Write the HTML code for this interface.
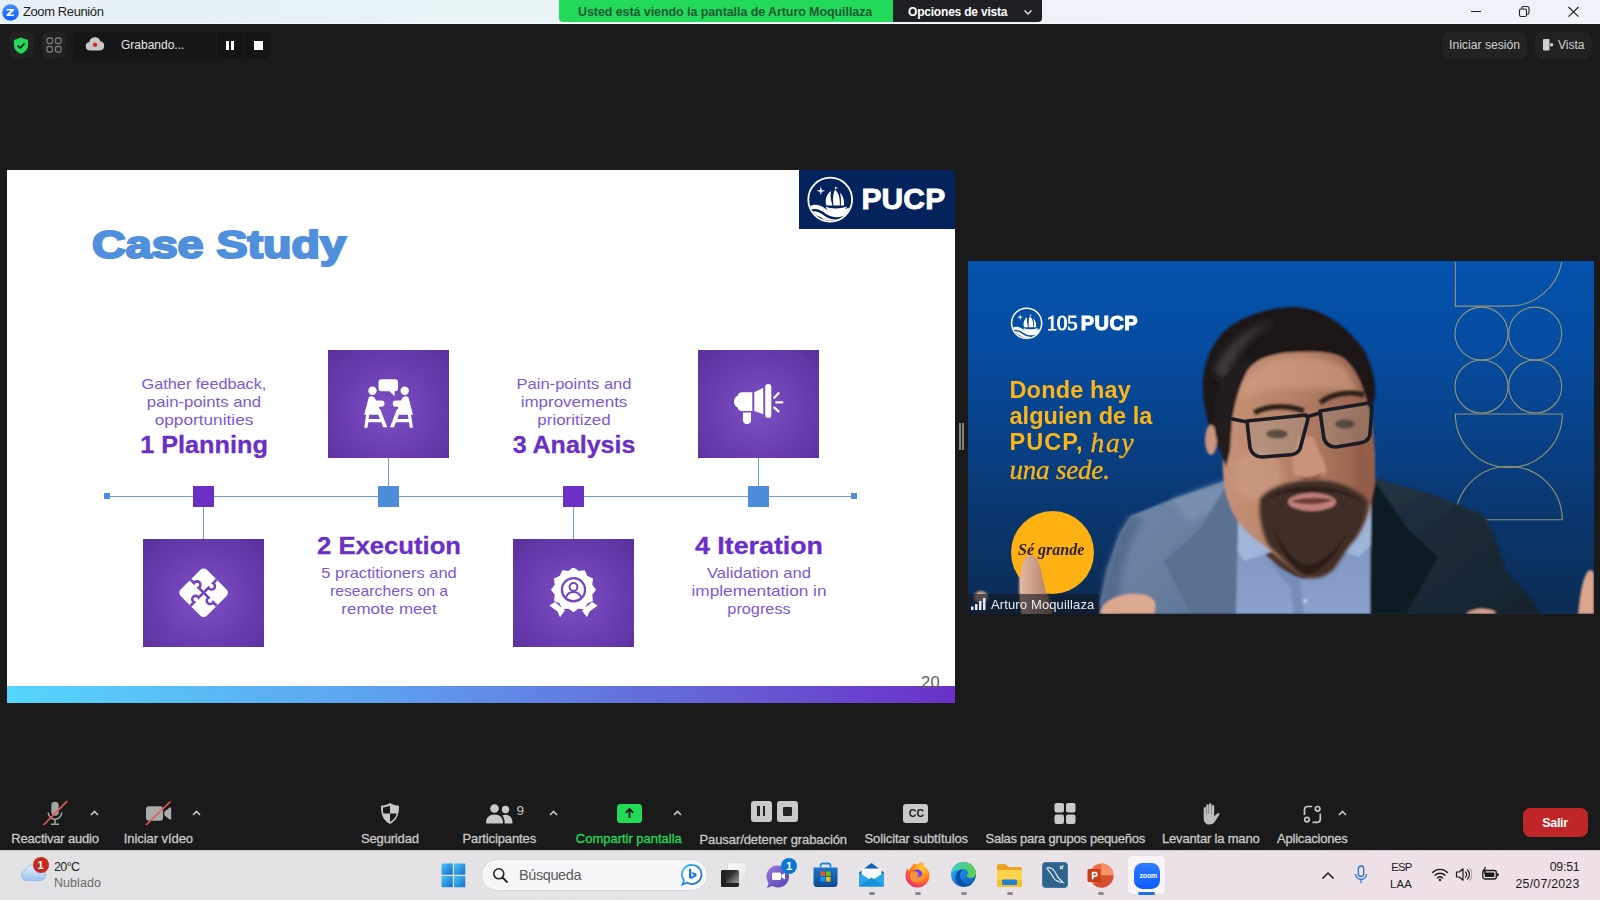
<!DOCTYPE html>
<html lang="es">
<head>
<meta charset="utf-8">
<title>Zoom Reunión</title>
<style>
*{box-sizing:border-box;margin:0;padding:0}
html,body{width:1600px;height:900px;overflow:hidden;background:#1a1a1a;font-family:"Liberation Sans",sans-serif;color:#fff}
body{position:relative}
.a{position:absolute}
.t{position:absolute;white-space:nowrap;line-height:1}
/* title bar */
#titlebar{left:0;top:0;width:1600px;height:24px;background:linear-gradient(90deg,#e5f0f8 0%,#e9f4f7 30%,#edf3f8 70%,#eff3f9 100%)}
#banner{left:559px;top:0;width:334px;height:22px;background:#23d959;border-radius:0 0 0 4px}
#opts{left:893px;top:0;width:149px;height:22px;background:#1f2023;border-radius:0 0 4px 0}
/* slide */
#slide{left:7px;top:170px;width:948px;height:533px;background:#fff;overflow:hidden}
#sbar{left:0;top:516px;width:948px;height:17px;background:linear-gradient(90deg,#55d6fb 0%,#5da0ee 40%,#6560d6 75%,#6b30c8 100%)}
.sq{position:absolute;background:radial-gradient(ellipse at 50% 55%,#7d50c4 0%,#6d40b4 45%,#5a309c 100%)}
.h{position:absolute;white-space:nowrap;line-height:1;color:#6a2fc6;font-weight:bold;font-size:24px;-webkit-text-stroke:.3px #6a2fc6;text-align:center;width:200px;transform-origin:50% 50%}
.p{position:absolute;white-space:nowrap;line-height:18px;color:#8058d2;font-size:15px;text-align:center;width:200px;transform-origin:50% 50%}
/* video */
#video{left:968px;top:261px;width:626px;height:353px;background:linear-gradient(180deg,#0a55b4 0%,#0b4a9e 40%,#0a3574 75%,#0a2a5c 100%);overflow:hidden}
/* toolbar */
.lbl{position:absolute;white-space:nowrap;line-height:1;color:#cfcfcf;font-size:13px;-webkit-text-stroke:.3px currentColor;top:832px}
/* taskbar */
#taskbar{left:0;top:850px;width:1600px;height:50px;background:linear-gradient(90deg,#e2e1e3 0%,#e5e3e6 45%,#eae2e7 70%,#f0e0e7 100%)}
</style>
</head>
<body>
<!-- TITLEBAR -->
<div id="titlebar" class="a"></div>
<div class="a" style="left:0;top:23px;width:1600px;height:1px;background:#f3fcfd"></div>
<svg class="a" style="left:2px;top:4px" width="17" height="17" viewBox="0 0 17 17"><defs><linearGradient id="zg" x1="0" y1="0" x2="0" y2="1"><stop offset="0" stop-color="#4a8cff"/><stop offset="1" stop-color="#0b5cff"/></linearGradient></defs><circle cx="8.5" cy="8.5" r="8.3" fill="url(#zg)"/><path d="M4.6 5h7.2v1.7L7.4 10.4h4.6V12H4.6v-1.6l4.5-3.8H4.6z" fill="#fff"/></svg>
<div class="t" style="left:23px;top:5px;font-size:13px;letter-spacing:-0.4px;color:#1d1d1d">Zoom Reunión</div>
<div id="banner" class="a"></div>
<div class="t" style="left:578px;top:6px;font-size:12.5px;letter-spacing:-0.08px;font-weight:bold;color:#1f5a33">Usted está viendo la pantalla de Arturo Moquillaza</div>
<div id="opts" class="a"></div>
<div class="t" style="left:908px;top:6px;font-size:12px;letter-spacing:-0.2px;font-weight:bold;color:#fff">Opciones de vista</div>
<svg class="a" style="left:1023px;top:9px" width="10" height="7" viewBox="0 0 10 7"><path d="M1.5 1.5L5 5l3.5-3.5" fill="none" stroke="#ddd" stroke-width="1.5"/></svg>
<svg class="a" style="left:1464px;top:4px" width="124" height="16" viewBox="0 0 124 16"><path d="M7 7.500h10" stroke="#1f1f1f" stroke-width="1"/><rect x="55.500" y="5" width="7" height="7.500" rx="1.600" fill="none" stroke="#1f1f1f" stroke-width="1.100"/><path d="M57.700 4.600a2 2 0 0 1 1.900-2.100H63a2 2 0 0 1 2 2V8.500a2 2 0 0 1-1.800 2" fill="none" stroke="#1f1f1f" stroke-width="1.100"/><path d="M104.500 3l10 9.700M114.500 3l-10 9.700" stroke="#1f1f1f" stroke-width="1.100"/></svg>
<!-- TOP CONTROLS -->
<div class="a" style="left:9px;top:32px;width:25px;height:26px;background:#222;border-radius:6px"></div>
<svg class="a" style="left:13px;top:37px" width="16" height="17" viewBox="0 0 16 17"><path d="M8 .5l7 2.600v5.400c0 4-3 6.900-7 8.200C4 15.400 1 12.500 1 8.500V3.100z" fill="#23d959"/><path d="M4.600 8.500l2.500 2.500 4.500-4.600" fill="none" stroke="#1a1a1a" stroke-width="1.700"/></svg>
<div class="a" style="left:42px;top:32px;width:24px;height:26px;background:#222;border-radius:6px"></div>
<svg class="a" style="left:46px;top:37px" width="16" height="16" viewBox="0 0 16 16"><g fill="none" stroke="#7a7a7a" stroke-width="1.300"><rect x="1" y="1" width="5.500" height="5.500" rx="1.500"/><rect x="9.500" y="1" width="5.500" height="5.500" rx="1.500"/><rect x="1" y="9.500" width="5.500" height="5.500" rx="1.500"/><rect x="9.500" y="9.500" width="5.500" height="5.500" rx="1.500"/></g></svg>
<div class="a" style="left:74px;top:32px;width:196px;height:27px;background:#141414;border-radius:4px"></div>
<div class="a" style="left:74px;top:32px;width:142px;height:27px;background:#161616;border-radius:4px 0 0 4px"></div>
<div class="a" style="left:216px;top:32px;width:1px;height:27px;background:#1c1c1c"></div>
<div class="a" style="left:243px;top:32px;width:1px;height:27px;background:#1c1c1c"></div>
<svg class="a" style="left:85px;top:36px" width="20" height="15" viewBox="0 0 20 15"><path d="M5 14.500a4.300 4.300 0 0 1-.6-8.550A5.600 5.600 0 0 1 15.300 5.200 4.700 4.700 0 0 1 15 14.500z" fill="#c9c9c9"/><circle cx="10" cy="8.800" r="2.200" fill="#e02828"/></svg>
<div class="t" style="left:121px;top:39px;font-size:12px;color:#e6e6e6">Grabando...</div>
<div class="a" style="left:226px;top:41px;width:3px;height:9px;background:#fff"></div>
<div class="a" style="left:231px;top:41px;width:3px;height:9px;background:#fff"></div>
<div class="a" style="left:254px;top:41px;width:9px;height:9px;background:#fff"></div>
<div class="a" style="left:1442px;top:32px;width:85px;height:27px;background:#222;border-radius:7px"></div>
<div class="t" style="left:1449px;top:39px;font-size:12.200px;color:#d0d0d0">Iniciar sesión</div>
<div class="a" style="left:1535px;top:32px;width:57px;height:27px;background:#222;border-radius:7px"></div>
<svg class="a" style="left:1542px;top:38px" width="12" height="14" viewBox="0 0 12 14"><rect x="1" y="1" width="6.500" height="11.500" rx="1" fill="#d0d0d0"/><circle cx="9.600" cy="6.800" r="1.700" fill="#d0d0d0"/></svg>
<div class="t" style="left:1558px;top:39px;font-size:12px;color:#d0d0d0">Vista</div>
<!-- SLIDE -->
<div id="slide" class="a">
  <div id="sbar" class="a"></div>
  <div class="t" style="left:914px;top:504px;font-size:16.500px;color:#5e5e62;letter-spacing:.3px">20</div>
  <!-- logo -->
  <div class="a" style="left:792px;top:0;width:156px;height:59px;background:#04225b"></div>
  <svg class="a" style="left:799px;top:6px" width="48" height="48" viewBox="0 0 48 48"><circle cx="24.200" cy="23.600" r="21.900" fill="none" stroke="#fff" stroke-width="1.800"/><clipPath id="ck1"><circle cx="24.200" cy="23.600" r="21"/></clipPath><g clip-path="url(#ck1)"><path d="M1 32C7 27.500 13 28 19 32.500 25 37 33 37.500 46 30V48H1z" fill="#fff"/><path d="M1 37C7 32.500 12.500 33.500 18 38 23.500 42.500 30 43.500 38 41M3 43C8 39 12 40 16.500 44 19 46 22 47 26 47" fill="none" stroke="#04225b" stroke-width="2.300"/></g><path d="M20.500 29.500C18.500 24 20.500 18 25 15 24 20 25 25 26.500 29.500zM27.500 29.500C26.500 22 27.500 16.500 29 13.500 32.500 16.500 34.300 22 33.800 29.500zM34.800 29.500C35.300 24 34.800 19.500 33.800 16.800 37 19.500 38.500 24 38 29.500zM29 13V10.800L32 12z" fill="#fff"/><path d="M19.500 30.500C24 33 34 33 41 30.500 39.500 35 34 37.500 27.500 36.500 23 36 20.500 34 19.500 30.500z" fill="#fff"/><path d="M14.800 10.500l.9 3.400 3.400.9-3.400.9-.9 3.400-.9-3.400-3.400-.9 3.400-.9z" fill="#fff"/></svg>
  <div class="t" style="left:854.500px;top:13.500px;font-size:30px;font-weight:bold;color:#fff;-webkit-text-stroke:.9px #fff;letter-spacing:.1px">PUCP</div>
  <!-- title -->
  <div class="t" style="left:85px;top:55px;font-size:39px;font-weight:bold;color:#4f8fdc;-webkit-text-stroke:2.200px #4f8fdc;padding:0 4px 12px 0;transform-origin:0 50%;transform:scaleX(1.196)">Case Study</div>
  <!-- timeline -->
  <div class="a" style="left:100px;top:325.500px;width:747px;height:1.200px;background:#6a9fe0"></div>
  <div class="a" style="left:97px;top:323px;width:6px;height:6px;background:#4d8edb"></div>
  <div class="a" style="left:844px;top:323px;width:6px;height:6px;background:#4d8edb"></div>
  <div class="a" style="left:196px;top:336px;width:1.200px;height:33px;background:#6a9fe0"></div>
  <div class="a" style="left:381px;top:288px;width:1.200px;height:28px;background:#6a9fe0"></div>
  <div class="a" style="left:566px;top:336px;width:1.200px;height:33px;background:#6a9fe0"></div>
  <div class="a" style="left:751px;top:288px;width:1.200px;height:28px;background:#6a9fe0"></div>
  <div class="a" style="left:186px;top:315.500px;width:21px;height:21px;background:#6a2fc5"></div>
  <div class="a" style="left:371px;top:315.500px;width:21px;height:21px;background:#4d8edb"></div>
  <div class="a" style="left:556px;top:315.500px;width:21px;height:21px;background:#6a2fc5"></div>
  <div class="a" style="left:741px;top:315.500px;width:21px;height:21px;background:#4d8edb"></div>
  <!-- squares -->
  <div class="sq" style="left:136px;top:368.500px;width:121px;height:108.500px"></div>
  <div class="sq" style="left:321px;top:179.500px;width:121px;height:108.500px"></div>
  <div class="sq" style="left:506px;top:368.500px;width:121px;height:108.500px"></div>
  <div class="sq" style="left:691px;top:179.500px;width:121px;height:108.500px"></div>
  <!-- icons -->
  <svg class="a" style="left:356.700px;top:209px" width="50" height="50" viewBox="0 0 50 50" fill="#fff">
    <path d="M17.500 .3h13.500a3 3 0 0 1 3 3v6a3 3 0 0 1-3 3h-.3v5l-5.200-5h-8a3 3 0 0 1-3-3v-6a3 3 0 0 1 3-3z"/>
    <g id="mp"><circle cx="8.500" cy="11.800" r="4.200"/><path d="M4.800 18.200Q7.500 16.300 10.200 18.200L12.200 21.400H17.300a3.200 3.200 0 0 1 0 6.400H15.200V30L16.300 35.800H.2Z"/><path d="M2.300 34.500h3.200L3.500 48.800H.2zM12 30h4.200L23.200 48.300h-4zM1.800 40h17v3.300h-17z"/></g>
    <use href="#mp" transform="translate(49.200 0) scale(-1 1)"/>
  </svg>
  <svg class="a" style="left:726.700px;top:209px" width="50" height="50" viewBox="0 0 50 50" fill="#fff">
    <path d="M8 13.300H18.300V32H8c-2.500 0-4-1.500-4.300-3.500C1.500 28 0 25.500 0 22.700s1.500-5.300 3.700-5.900C4 14.800 5.500 13.300 8 13.300z"/>
    <path d="M9 33.500h8v7.500a4 4 0 0 1-8 0z"/>
    <path d="M20.300 13.300L29.300 8.700V35.300L20.300 32z"/>
    <rect x="31.200" y="5" width="6.100" height="34" rx="3"/>
    <path d="M40.300 18.700L44.500 14.300M42.300 23.300H48.300M40.300 28.700L44.500 32.400" stroke="#fff" stroke-width="2.300" stroke-linecap="round" fill="none"/>
  </svg>
  <svg class="a" style="left:171.700px;top:397.900px" width="50" height="50" viewBox="0 0 50 50">
    <g transform="translate(24.600 24.700) rotate(45)">
      <rect x="-18.500" y="-18.500" width="37" height="37" rx="4.500" fill="#fff"/>
      <g fill="none" stroke="#7344bb" stroke-width="2.600">
        <path d="M0-18.500V-13.500a3.400 3.400 0 1 1 0 6.500V0M0 18.500V13.500a3.400 3.400 0 1 1 0-6.500V0M18.500 0H13.500a3.400 3.400 0 1 1-6.500 0H0M-18.500 0H-13.500a3.400 3.400 0 1 1 6.500 0H0"/>
      </g>
    </g>
  </svg>
  <svg class="a" style="left:541.700px;top:397.900px" width="50" height="50" viewBox="0 0 50 50">
    <path d="M.3 37.500L6 34 16 42.500 11 49.300 8.500 43.500zM48.700 37.500L43 34 33 42.500 38 49.300 40.500 43.500z" fill="#fff"/>
    <path d="M24.5 0.1 L29.3 3.7 L35.3 3.0 L37.7 8.5 L43.2 10.9 L42.5 16.9 L46.1 21.7 L42.5 26.5 L43.2 32.5 L37.7 34.9 L35.3 40.4 L29.3 39.7 L24.5 43.3 L19.7 39.7 L13.7 40.4 L11.3 34.9 L5.8 32.5 L6.5 26.5 L2.9 21.7 L6.5 16.9 L5.8 10.9 L11.3 8.5 L13.7 3.0 L19.7 3.7Z" fill="#fff" stroke="#fff" stroke-width="1.500" stroke-linejoin="round"/>
    <circle cx="24.500" cy="21.700" r="11.600" fill="none" stroke="#7344bb" stroke-width="2.200"/>
    <circle cx="24.500" cy="19" r="3.900" fill="none" stroke="#7344bb" stroke-width="2"/>
    <path d="M16.800 29.500c1.500-4 4.500-5.500 7.700-5.500s6.200 1.500 7.700 5.500" fill="none" stroke="#7344bb" stroke-width="2"/>
  </svg>
  <!-- texts -->
  <div class="p" style="left:96.5px;top:205px;transform:scaleX(1.084)">Gather feedback,</div>
  <div class="p" style="left:96.5px;top:223px;transform:scaleX(1.114)">pain-points and</div>
  <div class="p" style="left:96.5px;top:241px;transform:scaleX(1.149)">opportunities</div>
  <div class="h" style="left:96.5px;top:263.2px;transform:scaleX(1.052)">1 Planning</div>
  <div class="h" style="left:281.5px;top:363.9px;transform:scaleX(1.069)">2 Execution</div>
  <div class="p" style="left:281.5px;top:394px;transform:scaleX(1.097)">5 practitioners and</div>
  <div class="p" style="left:281.5px;top:412px;transform:scaleX(1.048)">researchers on a</div>
  <div class="p" style="left:281.5px;top:430px;transform:scaleX(1.132)">remote meet</div>
  <div class="p" style="left:466.5px;top:205px;transform:scaleX(1.103)">Pain-points and</div>
  <div class="p" style="left:466.5px;top:223px;transform:scaleX(1.133)">improvements</div>
  <div class="p" style="left:466.5px;top:241px;transform:scaleX(1.127)">prioritized</div>
  <div class="h" style="left:466.5px;top:263.2px;transform:scaleX(1.041)">3 Analysis</div>
  <div class="h" style="left:651.5px;top:363.9px;transform:scaleX(1.116)">4 Iteration</div>
  <div class="p" style="left:651.5px;top:394px;transform:scaleX(1.107)">Validation and</div>
  <div class="p" style="left:651.5px;top:412px;transform:scaleX(1.148)">implementation in</div>
  <div class="p" style="left:651.5px;top:430px;transform:scaleX(1.085)">progress</div>
</div>
<div class="a" style="left:959.200px;top:423px;width:1.600px;height:27px;background:#878383"></div>
<div class="a" style="left:962.200px;top:423px;width:1.600px;height:27px;background:#878383"></div>
<!-- VIDEO -->
<div id="video" class="a">
<svg class="a" style="left:0;top:0" width="626" height="353" viewBox="0 0 626 353">
  <defs>
    <linearGradient id="vbg" x1="0" y1="0" x2="0" y2="1"><stop offset="0" stop-color="#0452ae"/><stop offset=".25" stop-color="#064ca0"/><stop offset=".5" stop-color="#084187"/><stop offset=".75" stop-color="#0a356b"/><stop offset="1" stop-color="#0b2c52"/></linearGradient>
    <linearGradient id="jl" x1="0" y1="0" x2="1" y2="1"><stop offset="0" stop-color="#7189aa"/><stop offset=".6" stop-color="#677e9f"/><stop offset="1" stop-color="#5b7394"/></linearGradient>
    <linearGradient id="jr" x1="0" y1="0" x2="1" y2="1"><stop offset="0" stop-color="#243443"/><stop offset=".5" stop-color="#1b2a36"/><stop offset="1" stop-color="#16232c"/></linearGradient>
    <linearGradient id="skin" x1="0" y1="0" x2="1" y2="0"><stop offset="0" stop-color="#c59177"/><stop offset=".45" stop-color="#b58167"/><stop offset="1" stop-color="#955f4b"/></linearGradient>
    <linearGradient id="shirt" x1="0" y1="0" x2="0" y2="1"><stop offset="0" stop-color="#7a91bc"/><stop offset="1" stop-color="#8aa1cb"/></linearGradient>
    <filter id="b1" x="-5%" y="-5%" width="110%" height="110%"><feGaussianBlur stdDeviation="0.800"/></filter>
    <filter id="b3" x="-20%" y="-20%" width="140%" height="140%"><feGaussianBlur stdDeviation="3"/></filter>
    <filter id="b4" x="-10%" y="-10%" width="120%" height="120%"><feGaussianBlur stdDeviation="1.800"/></filter>
  </defs>
  <rect width="626" height="353" fill="url(#vbg)"/>
  <!-- gold line art -->
  <g fill="none" stroke="#b6a972" stroke-width="1.100" opacity=".8" transform="translate(.3 .8)">
    <path d="M487 0V44.300H540.400A53.500 53.500 0 0 0 593.500 0"/>
    <circle cx="513.200" cy="71.800" r="26.500"/><circle cx="566.900" cy="71.800" r="26.500"/>
    <circle cx="513.200" cy="124.700" r="26.500"/><circle cx="566.900" cy="124.700" r="26.500"/>
    <path d="M487 152.200H594A53.500 53.500 0 0 1 487 152.200z"/>
    <path d="M487 258H594A53.500 53.500 0 0 0 487 258z"/>
  </g>
  <!-- person -->
  <g filter="url(#b1)">
    <!-- jacket right (dark) -->
    <path d="M400 215L469 235 516 254 526 273 538 310 566 341 572 353H395z" fill="url(#jr)"/>
    <!-- jacket left (lit) -->
    <path d="M262 218L204 238 162 255 151 273 138 310 132 341V353H275L270 262z" fill="url(#jl)"/>
    <!-- neck -->
    <path d="M280 240H396V330H280z" fill="#4a342c"/>
    <path d="M162 255 151 273 138 310 132 341V353H150C150 320 158 285 176 258z" fill="#4f6689" opacity=".8" filter="url(#b3)"/>
    <path d="M204 238 262 218 266 240 220 262z" fill="#8299b8" opacity=".6" filter="url(#b3)"/>
    <!-- shirt -->
    <path d="M266 246L268 353H402L403 240C385 290 355 318 335 318 310 312 282 282 266 246z" fill="url(#shirt)"/>
    <path d="M266 246l-2 36 12 18 30-10zM403 240l2 42-14 14-26-8z" fill="#9fb5da"/>
    <path d="M262 218L270 262 268 353H222L196 300 232 268z" fill="#5a7192"/>
    <path d="M404 216L403 262 402 353H438L470 296 440 268z" fill="#111b24"/>
    <path d="M300 300L332 318 336 353H326L322 326z" fill="#6f86b2" opacity=".7"/>
    <circle cx="337" cy="340" r="2.300" fill="#b9c8e4"/>
    <!-- hair -->
    <path d="M252 190C244 176 237 158 235 130 234 108 240 90 252 75 266 58 296 47 324 46 352 46 376 62 396 89 404 104 408 120 407 136L402 152 394 130 262 150 258 192z" fill="#1d1919"/>
    <path d="M246 110C256 84 280 66 306 60 284 72 266 92 258 120z" fill="#4a4646" opacity=".7" filter="url(#b3)"/>
    <!-- ear -->
    <ellipse cx="243" cy="179" rx="6" ry="15" fill="#c8967c"/>
    <!-- face -->
    <path d="M262 141C266 128 274 112 288 101 298 94 316 91 332 91 350 90 364 91 374 96 386 104 394 122 398 137L404 160 407 192 407 222 401 251C396 266 390 276 382 284L366 308C354 320 338 320 326 310L294 283C280 274 270 262 264 250 256 232 254 212 255 196L258 169z" fill="url(#skin)"/>
    <path d="M270 136C276 116 292 100 316 97 340 94 364 96 378 108 386 118 388 128 390 134 350 124 304 126 270 136z" fill="#d3a084" opacity=".6" filter="url(#b3)"/>
    <ellipse cx="290" cy="215" rx="24" ry="26" fill="#d0a088" opacity=".55" filter="url(#b3)"/>
    <path d="M384 150C396 170 404 200 402 240 396 262 388 276 380 284 388 250 390 200 384 150z" fill="#8a5444" opacity=".55" filter="url(#b3)"/>
    <!-- sideburn / front lock -->
    <path d="M252 190C244 168 244 142 252 124 258 112 270 100 288 96 276 112 268 132 264 160L262 190 258 206z" fill="#211b1b"/>
    <!-- beard -->
    <path d="M292 238C300 226 322 220 345 219 368 219 388 226 400 240 399 258 392 274 382 284L366 308C354 320 338 320 326 310L300 284C294 270 290 254 292 238z" fill="#3f2d27" filter="url(#b4)"/>
    <path d="M304 262C312 292 326 308 338 314 352 312 368 296 380 270 368 292 350 304 338 304 324 300 312 284 304 262z" fill="#2a1d19"/>
    <path d="M296 240C310 228 330 226 345 226 362 226 382 230 396 242 380 232 362 230 345 230 328 230 310 232 296 240z" fill="#2b1e1a"/>
    <!-- mouth -->
    <ellipse cx="344" cy="241" rx="24" ry="9" fill="#c27f7a"/>
    <path d="M323 240C335 236 354 236 365 239 354 244 334 245 323 240z" fill="#6a3a38"/>
    <!-- nose -->
    <path d="M330 176C326 196 320 210 330 216 340 220 352 218 358 212 360 204 350 192 346 176z" fill="#c9927a"/>
    <path d="M354 211C348 216 336 218 329 214 338 223 352 221 354 211z" fill="#8a5544"/>
    <!-- brows / eyes -->
    <path d="M286 152C300 144 320 144 336 150" stroke="#241815" stroke-width="6" fill="none" opacity=".9"/>
    <path d="M352 142C364 132 382 130 396 134" stroke="#241815" stroke-width="6" fill="none" opacity=".9"/>
    <ellipse cx="309" cy="173" rx="11" ry="4.500" fill="#33221c" opacity=".85"/>
    <ellipse cx="377" cy="163" rx="10" ry="4.500" fill="#33221c" opacity=".85"/>
    <!-- hands -->
    <path d="M132 353C134 340 150 332 170 333 186 334 190 342 186 353z" fill="#dba98f"/>
    <path d="M54 353C50 330 50 305 58 296 64 292 70 296 73 306 78 326 82 340 84 353z" fill="#c99a82"/>
    <path d="M54 353C50 330 50 305 58 296 60 310 62 336 66 353z" fill="#e0b49c"/>
    <path d="M498 353C504 348 516 346 526 350L528 353z" fill="#d6a088"/>
    <ellipse cx="13" cy="336" rx="7" ry="6" fill="#c9a090"/>
    <path d="M610 353C612 335 614 318 620 310 624 308 626 310 626 314V353z" fill="#dba68c"/>
  </g>
  <!-- glasses -->
  <g fill="rgba(150,175,165,.22)" stroke="#1c1c24" stroke-width="3.600" stroke-linejoin="round">
    <path d="M279 160L338 154 340 158 332 188C330 192 326 194 320 194L294 196C288 196 284 193 282 187z"/>
    <path d="M352 150L401 142 404 146 402 172C402 178 398 181 392 182L368 186C362 186 358 183 356 178z"/>
  </g>
  <path d="M338 156L352 152M279 161L250 155" stroke="#1c1c24" stroke-width="3.400" fill="none"/>
</svg>
<!-- logo -->
<svg class="a" style="left:41.700px;top:46.200px" width="33" height="33" viewBox="0 0 48 48"><circle cx="24.200" cy="23.600" r="21.900" fill="none" stroke="#fff" stroke-width="2.200"/><clipPath id="ck2"><circle cx="24.200" cy="23.600" r="21"/></clipPath><g clip-path="url(#ck2)"><path d="M1 32C7 27.500 13 28 19 32.500 25 37 33 37.500 46 30V48H1z" fill="#fff"/><path d="M1 37C7 32.500 12.500 33.500 18 38 23.500 42.500 30 43.500 38 41M3 43C8 39 12 40 16.500 44 19 46 22 47 26 47" fill="none" stroke="#0650a8" stroke-width="2.300"/></g><path d="M20.500 29.500C18.500 24 20.500 18 25 15 24 20 25 25 26.500 29.500zM27.500 29.500C26.500 22 27.500 16.500 29 13.500 32.500 16.500 34.300 22 33.800 29.500zM34.800 29.500C35.300 24 34.800 19.500 33.800 16.800 37 19.500 38.500 24 38 29.500zM29 13V10.800L32 12z" fill="#fff"/><path d="M19.500 30.500C24 33 34 33 41 30.500 39.500 35 34 37.500 27.500 36.500 23 36 20.500 34 19.500 30.500z" fill="#fff"/><path d="M14.800 10.500l.9 3.400 3.400.9-3.400.9-.9 3.400-.9-3.400-3.400-.9 3.400-.9z" fill="#fff"/></svg>
<div class="t" style="left:78.500px;top:52.300px;font-family:'Liberation Serif',serif;font-size:21.500px;-webkit-text-stroke:.8px #fff;color:#fff;letter-spacing:-.45px">105</div>
<div class="t" style="left:112.800px;top:52.200px;font-size:20px;font-weight:bold;color:#fff;-webkit-text-stroke:1px #fff;letter-spacing:.45px">PUCP</div>
<!-- slogan -->
<div class="t" style="left:41.500px;top:117.500px;font-size:23.500px;font-weight:bold;letter-spacing:.15px;color:#fdb515">Donde hay</div>
<div class="t" style="left:41.500px;top:144.200px;font-size:23.500px;font-weight:bold;letter-spacing:.05px;color:#fdb515">alguien de la</div>
<div class="t" style="left:41.500px;top:170.200px;font-size:23.500px;font-weight:bold;letter-spacing:1.050px;color:#fdb515">PUCP,</div>
<div class="t" style="left:122.500px;top:167.500px;font-family:'Liberation Serif',serif;font-style:italic;font-size:27.500px;letter-spacing:1.800px;-webkit-text-stroke:.35px #fdb515;color:#fdb515">hay</div>
<div class="t" style="left:41.500px;top:195.700px;font-family:'Liberation Serif',serif;font-style:italic;font-size:27px;letter-spacing:-.2px;-webkit-text-stroke:.35px #fdb515;color:#fdb515">una sede.</div>
<!-- yellow circle -->
<div class="a" style="left:42.500px;top:250px;width:83px;height:83px;border-radius:50%;background:#fdb112"></div>
<div class="t" style="left:50px;top:281px;font-family:'Liberation Serif',serif;font-style:italic;font-weight:bold;font-size:16px;color:#2a1f30">Sé grande</div>
<!-- finger over circle -->
<svg class="a" style="left:40px;top:285px" width="60" height="68" viewBox="0 0 60 68"><defs><linearGradient id="fg2" x1="0" y1="0" x2="1" y2="0"><stop offset="0" stop-color="#e3b8a0"/><stop offset=".5" stop-color="#c99a82"/><stop offset="1" stop-color="#a97860"/></linearGradient><filter id="b2"><feGaussianBlur stdDeviation=".7"/></filter></defs><path d="M14 68C11 45 11 22 17 12 22 6 29 9 32 20 36 40 40 55 44 68z" fill="url(#fg2)" filter="url(#b2)"/></svg>
<!-- name label -->
<div class="a" style="left:0;top:332.500px;width:131px;height:20.500px;background:rgba(20,24,34,.62)"></div>
<svg class="a" style="left:3px;top:336px" width="15" height="14" viewBox="0 0 15 14"><g fill="#e8e8ee"><rect x="0" y="9.500" width="2.500" height="3.500"/><rect x="4" y="7" width="2.500" height="6"/><rect x="8" y="4" width="2.500" height="9"/><rect x="12" y="1" width="2.500" height="12"/></g></svg>
<div class="t" style="left:23px;top:337px;font-size:13px;letter-spacing:.13px;color:#ecebf3">Arturo Moquillaza</div>
</div>
<!-- TOOLBAR -->
<svg class="a" style="left:42px;top:799px" width="28" height="28" viewBox="0 0 28 28"><rect x="9.300" y="2.800" width="7.400" height="14" rx="3.700" fill="#a4a4a4"/><path d="M6.300 13.500a6.700 6.700 0 0 0 13.400 0M13 20.200v4.500M9 25.200h8" fill="none" stroke="#a4a4a4" stroke-width="1.600"/><path d="M1.500 26L25.200 2.200" stroke="#e9575c" stroke-width="1.700"/></svg>
<svg class="a" style="left:90px;top:810px" width="9" height="6" viewBox="0 0 9 6"><path d="M1 5L4.500 1.500 8 5" fill="none" stroke="#c9c9c9" stroke-width="1.600"/></svg>
<svg class="a" style="left:144px;top:799px" width="30" height="28" viewBox="0 0 30 28"><rect x="2" y="7.200" width="17" height="14.600" rx="3" fill="#ababab"/><path d="M20.300 12.800L25.600 8.600a1 1 0 0 1 1.600.8v10.200a1 1 0 0 1-1.600.8L20.300 16.200z" fill="#ababab"/><path d="M2 26L26.500 2.500" stroke="#e9575c" stroke-width="1.700"/></svg>
<svg class="a" style="left:192px;top:810px" width="9" height="6" viewBox="0 0 9 6"><path d="M1 5L4.500 1.500 8 5" fill="none" stroke="#c9c9c9" stroke-width="1.600"/></svg>
<svg class="a" style="left:379px;top:802px" width="22" height="23" viewBox="0 0 22 23"><path d="M11 1c3 2 6 2.600 9 2.800 0 9-2 14.500-9 18.200C4 18.300 2 12.800 2 3.800 5 3.600 8 3 11 1z" fill="#c9c9c9"/><path d="M11 3.500V11.500H4.300C4 9.500 3.900 7.500 3.900 5.600 6.500 5.300 9 4.600 11 3.500zM11 11.500h6.700c-.8 3.600-2.700 6.300-6.700 8.500z" fill="#1a1a1a"/></svg>
<svg class="a" style="left:485px;top:803px" width="30" height="21" viewBox="0 0 30 21"><circle cx="9.500" cy="5.500" r="4.300" fill="#c9c9c9"/><path d="M1 19.500c0-5 3.500-8 8.500-8s8.500 3 8.500 8c0 .5-.4 1-1 1H2c-.6 0-1-.5-1-1z" fill="#c9c9c9"/><circle cx="20.500" cy="6.500" r="3.700" fill="#c9c9c9"/><path d="M19 12c4.500-.8 8.500 2 8.500 7.500 0 .5-.4 1-1 1H19.500c.3-3-.2-6-2.300-8 .6-.2 1.200-.4 1.800-.5z" fill="#c9c9c9"/></svg>
<div class="t" style="left:516.500px;top:804.200px;font-size:13.500px;color:#c4c4c4">9</div>
<svg class="a" style="left:549px;top:810px" width="9" height="6" viewBox="0 0 9 6"><path d="M1 5L4.500 1.500 8 5" fill="none" stroke="#c9c9c9" stroke-width="1.600"/></svg>
<div class="a" style="left:617px;top:804px;width:25px;height:18.500px;background:#23d959;border-radius:3.500px"></div>
<svg class="a" style="left:624px;top:807px" width="11" height="12" viewBox="0 0 11 12"><path d="M5.500 11V2.500M1.800 5.800L5.500 2 9.200 5.800" fill="none" stroke="#111" stroke-width="1.700"/></svg>
<svg class="a" style="left:673px;top:810px" width="9" height="6" viewBox="0 0 9 6"><path d="M1 5L4.500 1.500 8 5" fill="none" stroke="#c9c9c9" stroke-width="1.600"/></svg>
<div class="a" style="left:750.500px;top:800.500px;width:21px;height:21px;background:#c9c9c9;border-radius:3px"></div>
<div class="a" style="left:757px;top:806px;width:2.500px;height:10px;background:#222"></div><div class="a" style="left:762.500px;top:806px;width:2.500px;height:10px;background:#222"></div>
<div class="a" style="left:776.500px;top:800.500px;width:21px;height:21px;background:#c9c9c9;border-radius:3px"></div>
<div class="a" style="left:782.500px;top:806.500px;width:9px;height:9px;background:#222;border-radius:1px"></div>
<div class="a" style="left:903px;top:804px;width:25px;height:18.500px;background:#c9c9c9;border-radius:3px"></div>
<div class="t" style="left:908.800px;top:807.700px;font-size:10.500px;font-weight:bold;color:#222;letter-spacing:.1px">CC</div>
<svg class="a" style="left:1054px;top:803px" width="22" height="21" viewBox="0 0 22 21"><g fill="#c9c9c9"><rect x=".5" y="0" width="9.500" height="9.500" rx="2"/><rect x="12" y="0" width="9.500" height="9.500" rx="2"/><rect x=".5" y="11.500" width="9.500" height="9.500" rx="2"/><rect x="12" y="11.500" width="9.500" height="9.500" rx="2"/></g></svg>
<svg class="a" style="left:1203px;top:802.500px" width="18" height="22" viewBox="0 0 18 22"><path d="M.7 5.200a1.150 1.150 0 0 1 2.300 0V11h.3V2.500a1.200 1.200 0 0 1 2.400 0V11h.3V1.500a1.200 1.200 0 0 1 2.400 0V11h.3V3.200a1.250 1.250 0 0 1 2.500 0V13.500l3.300-3.200c1-1 2.600.3 1.700 1.500L12.300 18c-1.300 2.300-3.300 3.600-6 3.600-3.500 0-5.600-2.600-5.600-6.100z" fill="#bdbdbd"/></svg>
<svg class="a" style="left:1302.500px;top:805px" width="19" height="19" viewBox="0 0 19 19"><g fill="none" stroke="#c9c9c9" stroke-width="1.700"><path d="M1.500 10V4.500a3 3 0 0 1 3-3h4.700M17.300 8.500V14.300a3 3 0 0 1-3 3h-4.800"/><circle cx="14.600" cy="3.800" r="2.300"/><circle cx="4" cy="14.600" r="2.300"/></g></svg>
<svg class="a" style="left:1338px;top:810px" width="9" height="6" viewBox="0 0 9 6"><path d="M1 5L4.500 1.500 8 5" fill="none" stroke="#c9c9c9" stroke-width="1.600"/></svg>
<div class="lbl" style="left:11.3px;top:832px;color:#c9c9c9;letter-spacing:-0.189px">Reactivar audio</div>
<div class="lbl" style="left:123.8px;top:832px;color:#c9c9c9;letter-spacing:-0.069px">Iniciar vídeo</div>
<div class="lbl" style="left:361px;top:832px;color:#c9c9c9;letter-spacing:-0.165px">Seguridad</div>
<div class="lbl" style="left:462.5px;top:832px;color:#c9c9c9;letter-spacing:-0.127px">Participantes</div>
<div class="lbl" style="left:575.8px;top:832px;color:#23d959;letter-spacing:-0.012px">Compartir pantalla</div>
<div class="lbl" style="left:699.5px;top:833px;color:#c9c9c9;letter-spacing:-0.088px">Pausar/detener grabación</div>
<div class="lbl" style="left:864.5px;top:832px;color:#c9c9c9;letter-spacing:-0.100px">Solicitar subtítulos</div>
<div class="lbl" style="left:985.5px;top:832px;color:#c9c9c9;letter-spacing:-0.259px">Salas para grupos pequeños</div>
<div class="lbl" style="left:1162px;top:832px;color:#c9c9c9;letter-spacing:-0.185px">Levantar la mano</div>
<div class="lbl" style="left:1277px;top:832px;color:#c9c9c9;letter-spacing:-0.208px">Aplicaciones</div>
<div class="a" style="left:1523.200px;top:808.100px;width:64.900px;height:28.800px;background:#c02627;border-radius:7.500px"></div>
<div class="t" style="left:1542.300px;top:816.700px;font-size:12.500px;font-weight:bold;color:#fff;letter-spacing:-.35px">Salir</div>
<!-- TASKBAR -->
<div id="taskbar" class="a"></div>
<div class="a" style="left:0;top:850px;width:1600px;height:1px;background:#c9c7cc"></div>
<!-- weather -->
<svg class="a" style="left:20px;top:862px" width="28" height="20" viewBox="0 0 28 20"><defs><linearGradient id="cl" x1="0" y1="0" x2="0" y2="1"><stop offset="0" stop-color="#e8f1fc"/><stop offset="1" stop-color="#9ec2f2"/></linearGradient></defs><path d="M6.500 18.500a5 5 0 0 1-.8-9.900A7.500 7.500 0 0 1 20 7.500a5.500 5.500 0 0 1 .5 11z" fill="url(#cl)" stroke="#8db4ea" stroke-width=".8"/></svg>
<div class="a" style="left:32.500px;top:857px;width:16px;height:16px;background:#c42b1c;border-radius:8px"></div>
<div class="t" style="left:37.500px;top:859.500px;font-size:11px;font-weight:bold;color:#fff">1</div>
<div class="t" style="left:54px;top:860.600px;font-size:12.500px;letter-spacing:-.6px;color:#1b1b1b">20°C</div>
<div class="t" style="left:54px;top:877px;font-size:12.500px;letter-spacing:.05px;color:#6a6a6a">Nublado</div>
<!-- start -->
<svg class="a" style="left:441px;top:863px" width="25" height="25" viewBox="0 0 25 25"><defs><linearGradient id="wg" x1="0" y1="0" x2="1" y2="1"><stop offset="0" stop-color="#4cc2f5"/><stop offset="1" stop-color="#0f6fd0"/></linearGradient></defs><g fill="url(#wg)"><rect x=".5" y=".5" width="11.300" height="11.300" rx=".8"/><rect x="13" y=".5" width="11.300" height="11.300" rx=".8"/><rect x=".5" y="13" width="11.300" height="11.300" rx=".8"/><rect x="13" y="13" width="11.300" height="11.300" rx=".8"/></g></svg>
<!-- search -->
<div class="a" style="left:481px;top:859px;width:227px;height:32px;background:#f7f7f9;border:1px solid #d9d8dd;border-radius:16px"></div>
<svg class="a" style="left:492px;top:867px" width="17" height="17" viewBox="0 0 17 17"><circle cx="6.800" cy="6.800" r="5" fill="none" stroke="#222" stroke-width="1.600"/><path d="M10.500 10.500L15 15" stroke="#222" stroke-width="1.800" stroke-linecap="round"/></svg>
<div class="t" style="left:519px;top:868px;font-size:14.500px;color:#5a5a5a;letter-spacing:-.4px">Búsqueda</div>
<svg class="a" style="left:680px;top:863px" width="24" height="24" viewBox="0 0 24 24"><defs><linearGradient id="bg1" x1="0" y1="0" x2="1" y2="1"><stop offset="0" stop-color="#35c1f1"/><stop offset="1" stop-color="#1b5fd8"/></linearGradient></defs><path d="M12 2a9.500 9.500 0 1 1-5 17.600L2.500 21.500 4 17.300A9.500 9.500 0 0 1 12 2z" fill="#fff" stroke="url(#bg1)" stroke-width="1.800"/><path d="M9 5.500l2.300.8v7.500l3-1.700-1.500-.7-.9-2.300 4.600 1.500v2.400L11.300 16 9 14.700z" fill="#1b6fe0"/></svg>
<!-- task view -->
<div class="a" style="left:728px;top:863px;width:18px;height:17px;background:linear-gradient(135deg,#fdfdfd,#e4e4e6);border-radius:2px;box-shadow:0 0 1px rgba(0,0,0,.2)"></div>
<div class="a" style="left:721px;top:870px;width:18px;height:17px;background:linear-gradient(135deg,#1f1f1f 0%,#2d2d2d 40%,#bdbdbd 100%);border-radius:2px"></div>
<div class="a" style="left:721px;top:870px;width:5px;height:17px;background:#222;border-radius:2px 0 0 2px"></div>
<div class="a" style="left:721px;top:883px;width:18px;height:4px;background:#222;border-radius:0 0 2px 2px"></div>
<!-- chat -->
<svg class="a" style="left:765px;top:864px" width="28" height="26" viewBox="0 0 28 26"><defs><linearGradient id="cg" x1="0" y1="0" x2="1" y2="1"><stop offset="0" stop-color="#9a7fe0"/><stop offset="1" stop-color="#4f3fb0"/></linearGradient></defs><path d="M13 1.500a11 11 0 1 1-5.500 20.500L2 24l1.600-5A11 11 0 0 1 13 1.500z" fill="url(#cg)"/><rect x="7" y="8.500" width="9" height="7.500" rx="1.500" fill="#fff"/><path d="M16.500 11l3.500-2v6.500l-3.500-2z" fill="#fff"/></svg>
<div class="a" style="left:781px;top:858px;width:16px;height:16px;background:#0a78d4;border-radius:8px"></div>
<div class="t" style="left:786px;top:860.500px;font-size:11px;font-weight:bold;color:#fff">1</div>
<!-- store -->
<svg class="a" style="left:812px;top:861px" width="27" height="27" viewBox="0 0 27 27"><defs><linearGradient id="sg" x1="0" y1="0" x2="0" y2="1"><stop offset="0" stop-color="#1a78c8"/><stop offset="1" stop-color="#0d4a94"/></linearGradient></defs><path d="M8.500 6.500V4.500a2 2 0 0 1 2-2h6a2 2 0 0 1 2 2v2" fill="none" stroke="#2a8ad8" stroke-width="1.800"/><path d="M1.500 6.500h24v16a3.500 3.500 0 0 1-3.500 3.500H5a3.500 3.500 0 0 1-3.500-3.500z" fill="url(#sg)"/><rect x="8.500" y="10.500" width="4.500" height="4.500" fill="#f25022"/><rect x="14" y="10.500" width="4.500" height="4.500" fill="#7fba00"/><rect x="8.500" y="16" width="4.500" height="4.500" fill="#00a4ef"/><rect x="14" y="16" width="4.500" height="4.500" fill="#ffb900"/></svg>
<!-- mail -->
<svg class="a" style="left:858px;top:862px" width="27" height="26" viewBox="0 0 27 26"><path d="M1 10.500L13.500 1 26 10.500V12H1z" fill="#0f5fb0"/><path d="M3.500 6.500h20V18h-20z" fill="#f4f8fc"/><path d="M1 10.500l12.500 8.300L26 10.500V24.500H1z" fill="#28a8ea"/><path d="M1 24.500L13.500 15.500 26 24.500z" fill="#1b8fdc"/></svg>
<!-- firefox -->
<svg class="a" style="left:904px;top:861px" width="27" height="27" viewBox="0 0 27 27"><defs><radialGradient id="fg" cx=".7" cy=".2" r="1"><stop offset="0" stop-color="#ffd23a"/><stop offset=".45" stop-color="#ff7a1a"/><stop offset="1" stop-color="#e31587"/></radialGradient><radialGradient id="fp" cx=".5" cy=".5" r=".6"><stop offset="0" stop-color="#9059ff"/><stop offset="1" stop-color="#5b2bd0"/></radialGradient></defs><path d="M13.500 3C16 1.500 18 1 19.500 2c-.5 1.500 0 2.500 2.500 4.500C24.500 9 25.500 12 25.500 14.500a12 12 0 0 1-24 0c0-3 1-5.500 2.500-7.500 0 1.500.5 2.500 1 3C5.500 7 9 5.500 9.500 2.500c1.500.5 3 1 4 .5z" fill="url(#fg)"/><circle cx="13" cy="14" r="5.500" fill="url(#fp)"/><path d="M7.500 11c2-1 4.500-1 6 .5 1.500 1.500 1 3.500-.5 4.500 3 .5 6-1.500 6-5 1.500 2 1.500 5.500-.5 8s-6 3.500-9.500 1.500S5.500 14.500 7.500 11z" fill="#ff9a2a" opacity=".9"/></svg>
<!-- edge -->
<svg class="a" style="left:950px;top:861px" width="27" height="27" viewBox="0 0 27 27"><defs><linearGradient id="eg" x1="0" y1="0" x2="1" y2="1"><stop offset="0" stop-color="#2fc2e8"/><stop offset=".5" stop-color="#1b7fd8"/><stop offset="1" stop-color="#0c55b0"/></linearGradient><linearGradient id="eg2" x1="0" y1="0" x2="1" y2="0"><stop offset="0" stop-color="#38c8d0"/><stop offset="1" stop-color="#5fd34a"/></linearGradient></defs><circle cx="13.500" cy="13.500" r="12.500" fill="url(#eg)"/><path d="M1.200 12C2 5.500 7.500 1 13.500 1S25 5 26 11.500c.3 3-1.500 5.500-5 5.500-2.500 0-4-1-4-2.500 0-1 1-1.500 1-3 0-2-2-3.500-4.500-3.500C8.500 8 4 10 1.200 12z" fill="url(#eg2)"/><path d="M10 13.500c0-2 1.500-4 4-4.500-4-1-8.500 2-8.500 7.500 0 5 4 9 9.500 9 3 0 5.500-1 7.500-3-2.500 1-5.500 1-8-.5-3-1.800-4.500-5-4.500-8.500z" fill="#0b4fa8"/></svg>
<!-- explorer -->
<svg class="a" style="left:996px;top:863px" width="27" height="25" viewBox="0 0 27 25"><path d="M1 3a2 2 0 0 1 2-2h6.500l3 3H24a2 2 0 0 1 2 2v3H1z" fill="#e9a520"/><path d="M1 7h25v14.500a2.500 2.500 0 0 1-2.500 2.500h-20A2.500 2.500 0 0 1 1 21.500z" fill="#fcd34a"/><path d="M1 17h25v4.500a2.500 2.500 0 0 1-2.500 2.500h-20A2.500 2.500 0 0 1 1 21.500z" fill="#f3bd2c"/><rect x="6" y="16.500" width="15" height="5.500" rx="1.200" fill="#1f7fd6"/></svg>
<!-- mysql -->
<svg class="a" style="left:1042px;top:862px" width="26" height="26" viewBox="0 0 26 26"><rect x=".5" y=".5" width="25" height="25" rx="3" fill="#2f658c"/><rect x=".5" y=".5" width="25" height="25" rx="3" fill="none" stroke="#3f7aa4" stroke-width="1"/><path d="M5 6c3-1 6 1 8 4 1.500 2.500 2.500 5.500 5 7.500l3 3-3.500-.5c-2-1.500-3.500-1-5-3C10.500 14.500 9 11 7 9z" fill="none" stroke="#dbe7f0" stroke-width="1.200"/><path d="M18 4l3 3M21.500 3.500l-3.500 3.500" stroke="#dbe7f0" stroke-width="1.200"/></svg>
<!-- powerpoint -->
<svg class="a" style="left:1087px;top:862px" width="27" height="27" viewBox="0 0 27 27"><circle cx="14.500" cy="13.500" r="12" fill="#ed6c47"/><path d="M14.500 1.500a12 12 0 0 1 12 12h-12z" fill="#ff8f6b"/><path d="M26.500 13.500a12 12 0 0 1-20 9l8-9z" fill="#d35230"/><rect x=".5" y="7" width="13" height="13" rx="1.500" fill="#c43e1c"/><path d="M4.800 9.800h3.200a2.600 2.600 0 0 1 0 5.200H6.600v2.300H4.800zM6.600 11.300v2.200h1.200a1.100 1.100 0 0 0 0-2.200z" fill="#fff"/></svg>
<!-- zoom -->
<div class="a" style="left:1127px;top:855px;width:39px;height:40px;background:#f8f4f8;border:1px solid #e6e0e6;border-radius:5px"></div>
<div class="a" style="left:1134px;top:862.500px;width:26px;height:26px;background:linear-gradient(180deg,#2f7bff,#0b5cff);border-radius:8.500px"></div>
<div class="t" style="left:1139.500px;top:871.500px;font-size:7px;font-weight:bold;color:#fff;letter-spacing:-.2px">zoom</div>
<div class="a" style="left:1138px;top:892px;width:17px;height:3px;background:#1a74d4;border-radius:1.500px"></div>
<div class="a" style="left:869px;top:892px;width:6px;height:2.500px;background:#8a8a8e;border-radius:1.500px"></div>
<div class="a" style="left:915px;top:892px;width:6px;height:2.500px;background:#8a8a8e;border-radius:1.500px"></div>
<div class="a" style="left:961px;top:892px;width:6px;height:2.500px;background:#8a8a8e;border-radius:1.500px"></div>
<div class="a" style="left:1006.5px;top:892px;width:6px;height:2.500px;background:#8a8a8e;border-radius:1.500px"></div>
<div class="a" style="left:1098px;top:892px;width:6px;height:2.500px;background:#8a8a8e;border-radius:1.500px"></div>
<!-- tray -->
<svg class="a" style="left:1321px;top:871px" width="14" height="9" viewBox="0 0 14 9"><path d="M1.500 7.500L7 2l5.500 5.500" fill="none" stroke="#1b1b1b" stroke-width="1.500"/></svg>
<svg class="a" style="left:1354px;top:865px" width="14" height="20" viewBox="0 0 14 20"><rect x="4.300" y="1" width="5.400" height="10.500" rx="2.700" fill="none" stroke="#2f6fd0" stroke-width="1.300"/><path d="M1.500 9a5.500 5.500 0 0 0 11 0M7 14.500V18" fill="none" stroke="#2f6fd0" stroke-width="1.300"/></svg>
<div class="t" style="left:1391.300px;top:862px;font-size:11.300px;color:#1b1b1b;letter-spacing:-.8px">ESP</div>
<div class="t" style="left:1390px;top:878.500px;font-size:11.300px;color:#1b1b1b;letter-spacing:.2px">LAA</div>
<svg class="a" style="left:1431px;top:867px" width="18" height="15" viewBox="0 0 18 15"><g fill="none" stroke="#1b1b1b" stroke-width="1.400" stroke-linecap="round"><path d="M1.500 5.500a10.500 10.500 0 0 1 15 0"/><path d="M4 8.300a7 7 0 0 1 10 0"/><path d="M6.500 11a3.600 3.600 0 0 1 5 0"/></g><circle cx="9" cy="13" r="1.200" fill="#1b1b1b"/></svg>
<svg class="a" style="left:1455px;top:867px" width="17" height="15" viewBox="0 0 17 15"><path d="M1.500 5h2.800L8 1.800v11.400L4.300 10H1.500z" fill="none" stroke="#1b1b1b" stroke-width="1.200" stroke-linejoin="round"/><path d="M10.500 5a3.500 3.500 0 0 1 0 5M12.500 3a6.300 6.300 0 0 1 0 9" fill="none" stroke="#1b1b1b" stroke-width="1.200" stroke-linecap="round"/><path d="M14.800 1.800a8.500 8.500 0 0 1 0 11.400" fill="none" stroke="#a9a3aa" stroke-width="1.200" stroke-linecap="round"/></svg>
<svg class="a" style="left:1481px;top:866px" width="19" height="15" viewBox="0 0 19 15"><rect x="1.800" y="4.500" width="13.500" height="8.500" rx="2" fill="none" stroke="#1b1b1b" stroke-width="1.300"/><rect x="3.800" y="6.500" width="9.500" height="4.500" rx=".8" fill="#1b1b1b"/><path d="M16 7.300h.8a.9.9 0 0 1 .9.900v1.100a.9.900 0 0 1-.9.900H16z" fill="#1b1b1b"/><path d="M4.500 1L2.500 4.500h2L3.500 8" fill="none" stroke="#1b1b1b" stroke-width="1.300"/></svg>
<div class="t" style="right:20.500px;top:861px;font-size:12.300px;color:#1b1b1b;letter-spacing:-.2px">09:51</div>
<div class="t" style="right:20.500px;top:878px;font-size:12.300px;color:#1b1b1b;letter-spacing:.25px">25/07/2023</div>
</body>
</html>
